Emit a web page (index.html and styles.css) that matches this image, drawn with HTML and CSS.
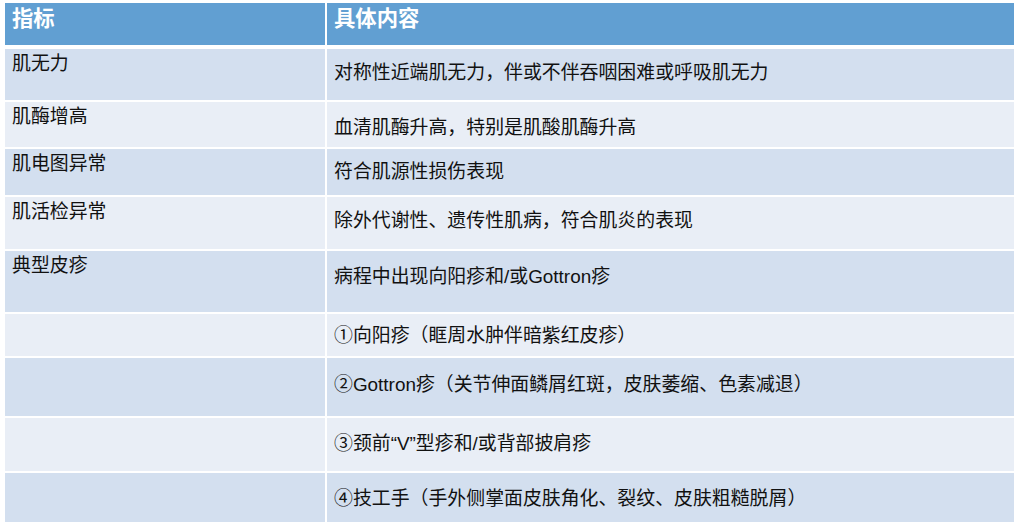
FILE: index.html
```html
<!DOCTYPE html>
<html lang="zh-CN">
<head>
<meta charset="utf-8">
<title>皮肌炎诊断指标</title>
<link rel="stylesheet" href="styles.css">
</head>
<body>
<div class="table">
  <div class="head">
    <div class="hcell">指标</div>
    <div class="hcell">具体内容</div>
  </div>
  <div class="row dark r1">
    <div class="key">肌无力</div>
    <div class="val">对称性近端肌无力，伴或不伴吞咽困难或呼吸肌无力</div>
  </div>
  <div class="row light r2">
    <div class="key">肌酶增高</div>
    <div class="val">血清肌酶升高，特别是肌酸肌酶升高</div>
  </div>
  <div class="row dark r3">
    <div class="key">肌电图异常</div>
    <div class="val">符合肌源性损伤表现</div>
  </div>
  <div class="row light r4">
    <div class="key">肌活检异常</div>
    <div class="val">除外代谢性、遗传性肌病，符合肌炎的表现</div>
  </div>
  <div class="row dark r5">
    <div class="key">典型皮疹</div>
    <div class="val">病程中出现向阳疹和/或Gottron疹</div>
  </div>
  <div class="row light r6">
    <div class="key"></div>
    <div class="val"><span class="num">①</span>向阳疹（眶周水肿伴暗紫红皮疹）</div>
  </div>
  <div class="row dark r7">
    <div class="key"></div>
    <div class="val"><span class="num">②</span>Gottron疹（关节伸面鳞屑红斑，皮肤萎缩、色素减退）</div>
  </div>
  <div class="row light r8">
    <div class="key"></div>
    <div class="val"><span class="num">③</span>颈前“V”型疹和/或背部披肩疹</div>
  </div>
  <div class="row dark r9">
    <div class="key"></div>
    <div class="val"><span class="num">④</span>技工手（手外侧掌面皮肤角化、裂纹、皮肤粗糙脱屑）</div>
  </div>
</div>
</body>
</html>
```

FILE: styles.css
```css
html, body {
  margin: 0;
  padding: 0;
  background: #ffffff;
}

body {
  font-family: "Liberation Sans", "Noto Sans CJK SC", sans-serif;
  color: #111111;
}

.table {
  display: flex;
  flex-direction: column;
  gap: 2px;
  padding: 3px 0 0 5px;
  width: 1009px;
}

.head,
.row {
  display: grid;
  grid-template-columns: 320px 687px;
  column-gap: 2px;
}

.head {
  height: 42px;
  margin-bottom: 2px;
}

.hcell {
  background: #619fd2;
  color: #ffffff;
  font-weight: bold;
  font-size: 21.33px;
  line-height: 26px;
  padding: 3px 7px 0;
}

.key,
.val {
  font-size: 18.9px;
  line-height: 22px;
  padding-left: 7px;
  white-space: nowrap;
}

.key {
  padding-top: 4px;
}

.val {
  padding-top: 13px;
}

.num {
  font-family: "Noto Sans CJK SC", sans-serif;
}

.dark .key,
.dark .val {
  background: #d3dfef;
}

.light .key,
.light .val {
  background: #e9eef6;
}

.r1 { height: 51px; }
.r2 { height: 45px; }
.r3 { height: 46px; }
.r4 { height: 52px; }
.r5 { height: 61px; }
.r6 { height: 42px; }
.r7 { height: 58px; }
.r8 { height: 53px; }
.r9 { height: 49px; }

.r2 .val { padding-top: 15px; }
.r3 .val { padding-top: 12px; }
.r5 .val { padding-top: 15px; }
.r6 .val { padding-top: 9px; }
.r7 .val { padding-top: 14px; }
```
